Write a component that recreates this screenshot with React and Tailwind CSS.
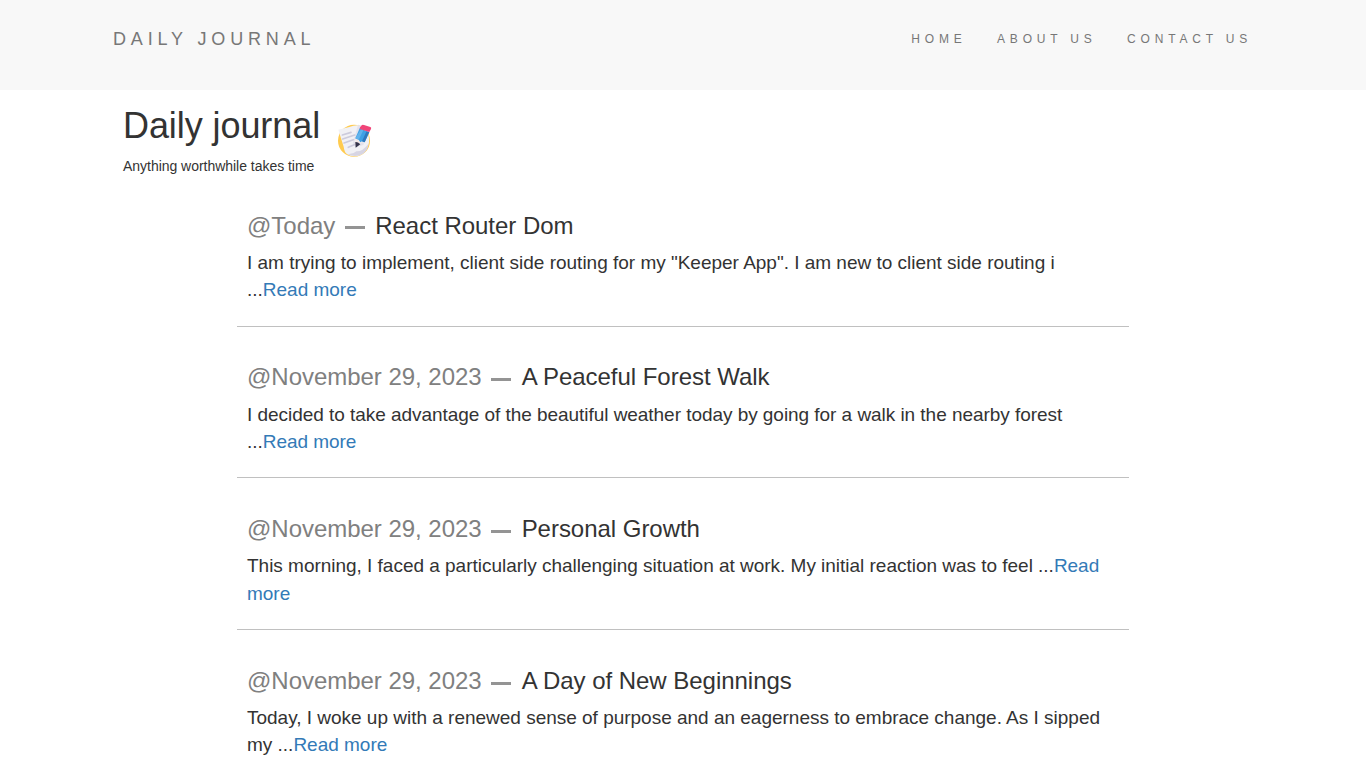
const entries = [
  { date: "Today", title: "React Router Dom", tracking: "tracking-[-0.01px]", text: 'I am trying to implement, client side routing for my "Keeper App". I am new to client side routing i ...' },
  { date: "November 29, 2023", title: "A Peaceful Forest Walk", tracking: "tracking-[-0.045px]", text: "I decided to take advantage of the beautiful weather today by going for a walk in the nearby forest ..." },
  { date: "November 29, 2023", title: "Personal Growth", tracking: "tracking-[-0.02px]", text: "This morning, I faced a particularly challenging situation at work. My initial reaction was to feel ..." },
  { date: "November 29, 2023", title: "A Day of New Beginnings", tracking: "tracking-[-0.012px]", text: "Today, I woke up with a renewed sense of purpose and an eagerness to embrace change. As I sipped my ..." },
];

function MemoIcon() {
  return (
    <svg viewBox="39 42 102 102" className="mt-[18px] ml-[17.5px] h-[34px] w-[34px]">
      <circle cx="87" cy="92" r="48" fill="#ffcb4f" />
      <path d="M40 59L73 51Q92 43 114 48L127 67Q137 90 129 107Q120 133 97 138Q78 141 67 133Q58 128 56 110Z" fill="#f1f1f5" />
      <path d="M67 132Q84 134 94 124Q112 125 131 101Q128 121 114 131Q91 145 67 132Z" fill="#d7d5e3" />
      <path d="M99 44L108 46L88 94L93 101L109 94L122 83L115 105L92 112L84 99Z" fill="#dcdae6" opacity="0.65" />
      <path d="M52 75L78 67M53 87L89 75M57 99L85 89M70 112L91 103" fill="none" stroke="#cccbdc" strokeWidth="5" strokeLinecap="round" />
      <path d="M103 60L92 82L91 106L114 97L131 70Z" fill="#f2e8e7" />
      <path d="M104 55L133 66L119 97L111 94L106 97L101 89L91 85Z" fill="#3fa1e5" />
      <path d="M108 58L115 61L102 88L101 89L91 85Z" fill="#62b3ec" />
      <path d="M124 65L133 66L119 97L111 94Z" fill="#3078bd" />
      <path d="M105 52L110 46Q112 43 117 45L136 51Q140 53 138 57L133 66L104 57Z" fill="#f04478" />
      <path d="M91 96Q98 95 106 103L92 113Z" fill="#34344b" />
    </svg>
  );
}

export default function App() {
  return (
    <div className="h-screen overflow-hidden bg-white font-['Helvetica_Neue',Helvetica,'Liberation_Sans',Arial,sans-serif] text-[#333]">
      <nav className="flex h-[90px] items-start justify-between bg-[#f8f8f8] pl-[113px] pr-[111px] pt-7 text-[#777]">
        <span className="pt-px text-[18px] leading-5 tracking-[4.85px]">DAILY JOURNAL</span>
        <div className="flex gap-[30.5px] pt-px pr-[3px] text-[12px] leading-5 tracking-[4.8px]">
          <a>HOME</a><a>ABOUT US</a><a>CONTACT US</a>
        </div>
      </nav>
      <header className="h-[85px] px-[123px] pt-4">
        <div className="flex h-[50px] items-start">
          <h1 className="text-[36px] leading-10 tracking-[-0.08px]">Daily journal</h1>
          <MemoIcon />
        </div>
        <p className="text-[14px] leading-5 tracking-[-0.03px]">Anything worthwhile takes time</p>
      </header>
      <main className="mx-auto w-[892px]">
        {entries.map((e) => (
          <article key={e.title} className="h-[151.7px] border-b border-[#c0c0c0] px-[10px] pt-[36.7px]">
            <h2 className="flex items-center text-[24px] leading-[27px] tracking-[-0.03px]">
              <span className="text-[#808080]">@{e.date}</span>
              <span className="mr-[10.5px] ml-[9.5px] mt-[5.6px] h-[3px] w-5 bg-[#949494]" />
              <span>{e.title}</span>
            </h2>
            <p className={`mt-[10.3px] text-[19px] leading-[27.14px] ${e.tracking}`}>
              {e.text}<a className="text-[#337ab7]">Read more</a>
            </p>
          </article>
        ))}
      </main>
    </div>
  );
}
